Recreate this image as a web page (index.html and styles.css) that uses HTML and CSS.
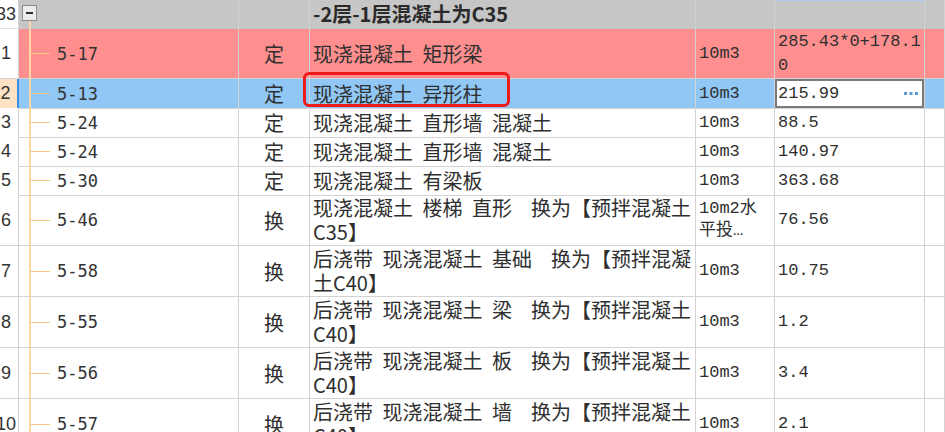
FILE: index.html
```html
<!DOCTYPE html>
<html lang="zh-CN">
<head>
<meta charset="utf-8">
<title>定额列表</title>
<link rel="stylesheet" href="styles.css">
</head>
<body>
<div class="sheet">
  <div class="row hdr">
    <div class="c num"><span>33</span></div>
    <div class="c tree tree-top"><span class="toggle"></span></div>
    <div class="c type"></div>
    <div class="c name"><span class="title">-2层-1层混凝土为C35</span></div>
    <div class="c unit"></div>
    <div class="c qty qty-top"></div>
    <div class="c extra"></div>
  </div>

  <div class="row tall r-red">
    <div class="c num"><span>1</span></div>
    <div class="c tree"><span>5-17</span></div>
    <div class="c type"><span>定</span></div>
    <div class="c name"><span>现浇混凝土 矩形梁</span></div>
    <div class="c unit"><span>10m3</span></div>
    <div class="c qty"><span>285.43*0+178.10</span></div>
    <div class="c extra"></div>
  </div>

  <div class="row single r-sel">
    <div class="c num num-sel"><span>2</span></div>
    <div class="c tree"><span>5-13</span></div>
    <div class="c type"><span>定</span></div>
    <div class="c name name-marked"><span>现浇混凝土 异形柱</span><span class="mark"></span></div>
    <div class="c unit"><span>10m3</span></div>
    <div class="c qty qty-edit"><span>215.99</span><svg class="dots" width="14" height="3" viewBox="0 0 14 3"><rect x="0" y="0" width="3" height="3" fill="#5b9bd8"/><rect x="5.5" y="0" width="3" height="3" fill="#5b9bd8"/><rect x="11" y="0" width="3" height="3" fill="#5b9bd8"/></svg></div>
    <div class="c extra"></div>
  </div>

  <div class="row single">
    <div class="c num"><span>3</span></div>
    <div class="c tree"><span>5-24</span></div>
    <div class="c type"><span>定</span></div>
    <div class="c name"><span>现浇混凝土 直形墙 混凝土</span></div>
    <div class="c unit"><span>10m3</span></div>
    <div class="c qty"><span>88.5</span></div>
    <div class="c extra"></div>
  </div>

  <div class="row single">
    <div class="c num"><span>4</span></div>
    <div class="c tree"><span>5-24</span></div>
    <div class="c type"><span>定</span></div>
    <div class="c name"><span>现浇混凝土 直形墙 混凝土</span></div>
    <div class="c unit"><span>10m3</span></div>
    <div class="c qty"><span>140.97</span></div>
    <div class="c extra"></div>
  </div>

  <div class="row single">
    <div class="c num"><span>5</span></div>
    <div class="c tree"><span>5-30</span></div>
    <div class="c type"><span>定</span></div>
    <div class="c name"><span>现浇混凝土 有梁板</span></div>
    <div class="c unit"><span>10m3</span></div>
    <div class="c qty"><span>363.68</span></div>
    <div class="c extra"></div>
  </div>

  <div class="row double">
    <div class="c num"><span>6</span></div>
    <div class="c tree"><span>5-46</span></div>
    <div class="c type"><span>换</span></div>
    <div class="c name"><span>现浇混凝土 楼梯 直形  换为【预拌混凝土<br>C35】</span></div>
    <div class="c unit"><span>10m2水<br>平投…</span></div>
    <div class="c qty"><span>76.56</span></div>
    <div class="c extra"></div>
  </div>

  <div class="row double">
    <div class="c num"><span>7</span></div>
    <div class="c tree"><span>5-58</span></div>
    <div class="c type"><span>换</span></div>
    <div class="c name"><span>后浇带 现浇混凝土 基础  换为【预拌混凝<br>土C40】</span></div>
    <div class="c unit"><span>10m3</span></div>
    <div class="c qty"><span>10.75</span></div>
    <div class="c extra"></div>
  </div>

  <div class="row double">
    <div class="c num"><span>8</span></div>
    <div class="c tree"><span>5-55</span></div>
    <div class="c type"><span>换</span></div>
    <div class="c name"><span>后浇带 现浇混凝土 梁  换为【预拌混凝土<br>C40】</span></div>
    <div class="c unit"><span>10m3</span></div>
    <div class="c qty"><span>1.2</span></div>
    <div class="c extra"></div>
  </div>

  <div class="row double">
    <div class="c num"><span>9</span></div>
    <div class="c tree"><span>5-56</span></div>
    <div class="c type"><span>换</span></div>
    <div class="c name"><span>后浇带 现浇混凝土 板  换为【预拌混凝土<br>C40】</span></div>
    <div class="c unit"><span>10m3</span></div>
    <div class="c qty"><span>3.4</span></div>
    <div class="c extra"></div>
  </div>

  <div class="row double">
    <div class="c num"><span>10</span></div>
    <div class="c tree"><span>5-57</span></div>
    <div class="c type"><span>换</span></div>
    <div class="c name"><span>后浇带 现浇混凝土 墙  换为【预拌混凝土<br>C40】</span></div>
    <div class="c unit"><span>10m3</span></div>
    <div class="c qty"><span>2.1</span></div>
    <div class="c extra"></div>
  </div>
</div>
</body>
</html>
```

FILE: styles.css
```css
html, body {
  margin: 0;
  padding: 0;
  background: #ffffff;
  overflow: hidden;
}

body {
  color: #2f2f2f;
  font-family: "Noto Sans CJK SC", sans-serif;
}

.sheet {
  margin-left: -6px;
  width: 951px;
}

.row {
  display: grid;
  grid-template-columns: 25px 220px 71px 386px 79px 150px 1fr;
}

.hdr { height: 29px; }
.tall { height: 50px; }
.single { height: 29px; }
.double { height: 51px; }

.c {
  box-sizing: border-box;
  display: flex;
  align-items: center;
  border-right: 1px solid #d3d3d3;
  border-bottom: 1px solid #d3d3d3;
  min-width: 0;
}

/* row number column */
.num {
  justify-content: center;
  font-family: "Liberation Sans", sans-serif;
  font-size: 18px;
  background: #ffffff;
  color: #333;
  overflow: hidden;
}

.num-sel {
  background: #fde3c4;
  border-right: 2px solid #3c8fe8;
}

/* tree column */
.tree {
  padding-left: 38px;
  font-family: "DejaVu Sans Mono", monospace;
  font-size: 17px;
  color: #333;
  background-image:
    linear-gradient(#fcd7a4, #fcd7a4),
    linear-gradient(#f7c78a, #f7c78a);
  background-size: 2px 100%, 20px 1px;
  background-position: 10px 0, 11px 50%;
  background-repeat: no-repeat;
}

.tree-top {
  padding-left: 3px;
  align-items: flex-start;
  background-image: linear-gradient(#fcd7a4, #fcd7a4);
  background-size: 2px 8px;
  background-position: 10px 100%;
}

.toggle {
  box-sizing: border-box;
  margin-top: 5px;
  width: 15px;
  height: 16px;
  border: 1px solid #8c8c8c;
  background: #ececec;
  display: flex;
  align-items: center;
  justify-content: center;
}

.toggle::before {
  content: "";
  width: 7px;
  height: 2px;
  background: #2a2a2a;
}

/* type column */
.type {
  justify-content: center;
  font-size: 20px;
}

/* name column */
.name {
  padding-left: 3px;
  font-size: 20px;
  line-height: 24px;
  white-space: pre;
  word-spacing: 5px;
}

.title {
  font-weight: 700;
  color: #2a2a2a;
}

.name-marked {
  position: relative;
}

.mark {
  position: absolute;
  left: -7px;
  top: -7px;
  width: 207px;
  height: 35px;
  box-sizing: border-box;
  border: 3px solid #f01a1a;
  border-radius: 6px;
  z-index: 2;
}

/* unit column */
.unit {
  padding-left: 3px;
  font-family: "Liberation Mono", "Noto Sans CJK SC", monospace;
  font-size: 17px;
  line-height: 22px;
  overflow: hidden;
}

/* quantity column */
.qty {
  padding-left: 3px;
  font-family: "Liberation Mono", monospace;
  font-size: 17px;
  line-height: 24px;
  word-break: break-all;
  overflow: hidden;
}

.qty-top {
  box-shadow: inset 0 1px 0 #a9c8ea;
}

.qty-edit {
  background: #ffffff;
  box-shadow: inset 0 0 0 2px #7a7a7a;
  justify-content: space-between;
  padding-right: 6px;
}

.dots {
  display: block;
}

/* row colours */
.hdr .c {
  background-color: #c6c6c6;
  border-bottom-color: #c6c6c6;
  border-right-color: #d2d2d2;
}

.hdr .num {
  background: #ffffff;
  border-bottom-color: #e2e2e2;
}

.r-red .c {
  background-color: #ff8f8f;
}

.r-red .num {
  background-color: #ffffff;
}

.r-sel .c {
  background-color: #90c7f4;
}

.r-sel .num-sel {
  background-color: #fde3c4;
}

.r-sel .qty-edit {
  background-color: #ffffff;
}
```
